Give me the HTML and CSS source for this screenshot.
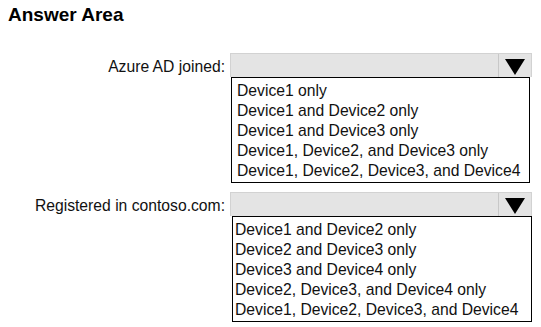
FILE: index.html
```html
<!DOCTYPE html>
<html lang="en">
<head>
    <meta charset="UTF-8">
    <title>Answer Area</title>
    <link rel="stylesheet" href="styles.css">
</head>
<body>
<div class="answer-area">
    <h1 class="title">Answer Area</h1>

    <div class="question">
        <div class="label">Azure AD joined:</div>
        <div class="dropdown">
            <div class="select">
                <div class="select-value"></div>
                <div class="select-arrow"><span class="triangle"></span></div>
            </div>
            <ul class="options">
                <li>Device1 only</li>
                <li>Device1 and Device2 only</li>
                <li>Device1 and Device3 only</li>
                <li>Device1, Device2, and Device3 only</li>
                <li>Device1, Device2, Device3, and Device4</li>
            </ul>
        </div>
    </div>

    <div class="question">
        <div class="label">Registered in contoso.com:</div>
        <div class="dropdown">
            <div class="select">
                <div class="select-value"></div>
                <div class="select-arrow"><span class="triangle"></span></div>
            </div>
            <ul class="options options-second">
                <li>Device1 and Device2 only</li>
                <li>Device2 and Device3 only</li>
                <li>Device3 and Device4 only</li>
                <li>Device2, Device3, and Device4 only</li>
                <li>Device1, Device2, Device3, and Device4</li>
            </ul>
        </div>
    </div>
</div>
</body>
</html>
```

FILE: styles.css
```css
html {
    font-family: "Liberation Sans", Arial, sans-serif;
}
body {
    margin: 0;
    background: #fff;
    color: #111;
}
.answer-area {
    padding: 4px 0 0 0;
}
.title {
    margin: 0 0 27px 8px;
    font-size: 19px;
    line-height: 22px;
    font-weight: bold;
    color: #000;
}
.question {
    display: grid;
    grid-template-columns: 225px 302px;
    column-gap: 5px;
    margin-bottom: 9px;
}
.label {
    text-align: right;
    font-size: 15.7px;
    line-height: 20px;
    padding-top: 4px;
}
.select {
    display: flex;
    height: 23px;
    background: #e4e4e4;
    border: 1px solid #d2d2d2;
    border-bottom: none;
}
.select-value {
    flex-grow: 1;
}
.select-arrow {
    width: 32px;
    border-left: 1px solid #c8c8c8;
    display: flex;
    align-items: center;
    justify-content: center;
}
.triangle {
    width: 0;
    height: 0;
    border-left: 10px solid transparent;
    border-right: 10px solid transparent;
    border-top: 16px solid #000;
    margin-top: 3px;
}
.options {
    list-style: none;
    margin: 0 2px 0 1px;
    padding: 3px 5px 1px 5px;
    border: 1px solid #000;
    font-size: 15.7px;
    line-height: 20px;
}
.options-second {
    margin: 0 0 0 2px;
    padding-left: 2px;
}
```
